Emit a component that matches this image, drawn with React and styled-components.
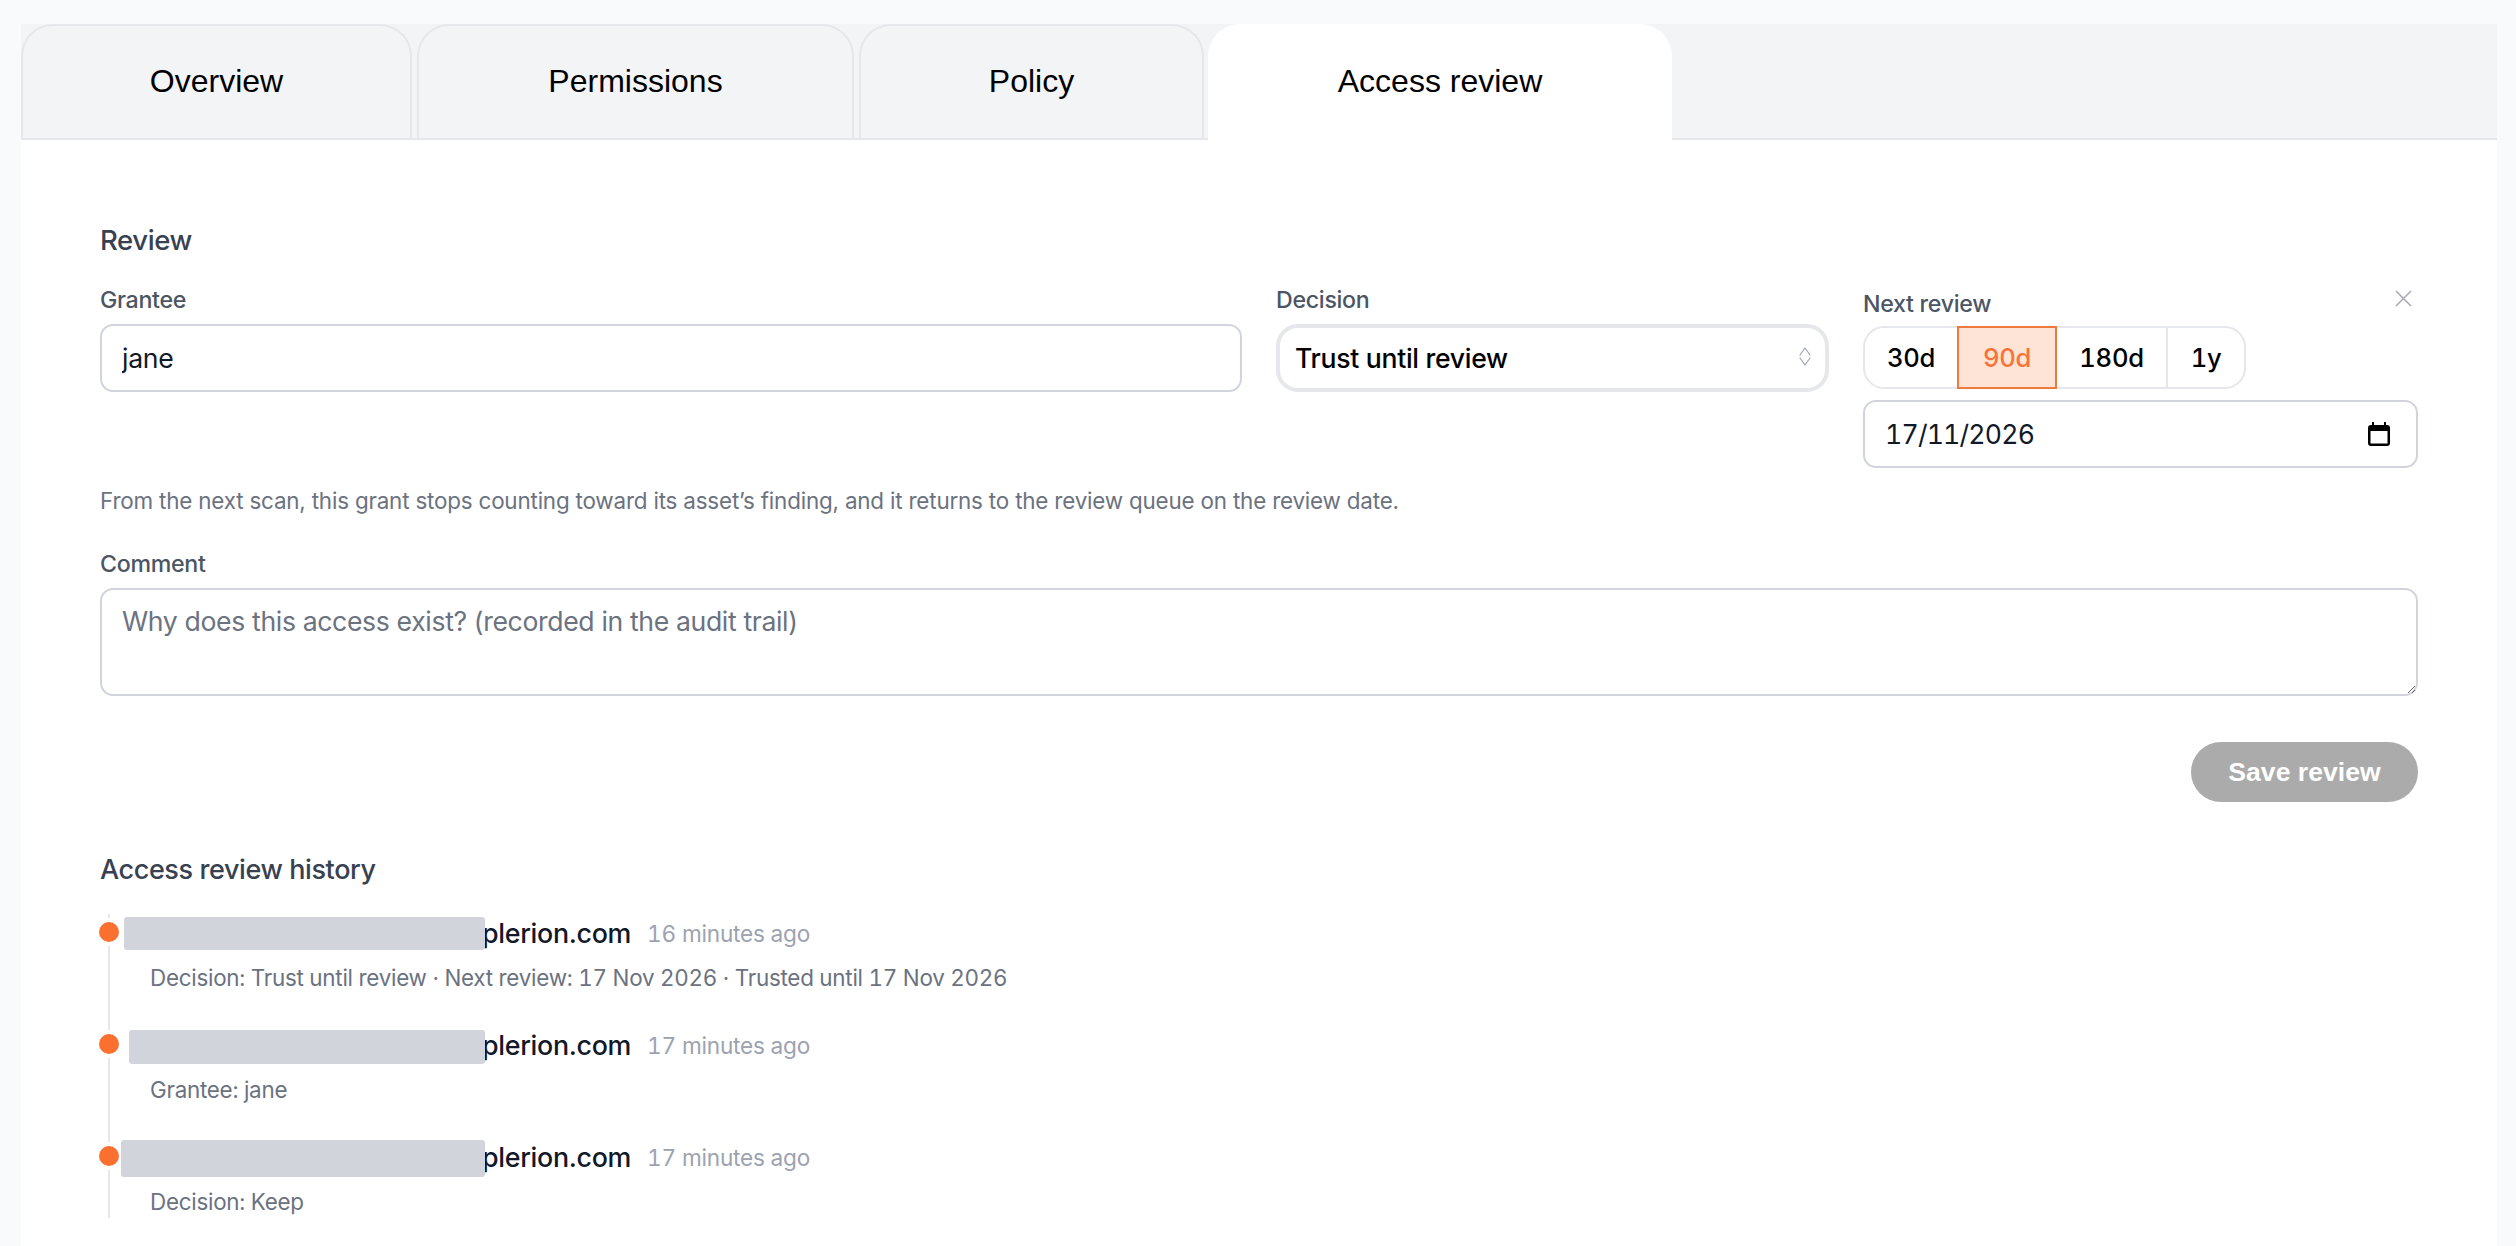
import React from "react";
import styled, { createGlobalStyle } from "styled-components";

const Global = createGlobalStyle`
  html, body { margin: 0; padding: 0; background: #f9fafb; overflow: hidden; }
  body { font-family: Inter, "Noto Sans", sans-serif; color: #111827; }
  * { box-sizing: border-box; }
`;

const Page = styled.div`
  height: 1246px;
  padding: 24px 19px 0 21px;
  overflow: hidden;
`;

const TabBar = styled.div`
  display: flex;
  gap: 5px;
  height: 116px;
  background: #f3f4f6;
  border-bottom: 2px solid #e5e7eb;
`;

const Tab = styled.div`
  height: ${(p) => (p.$active ? "116px" : "114px")};
  width: ${(p) => p.$w}px;
  margin-left: ${(p) => (p.$active ? "-1px" : "0")};
  padding-bottom: ${(p) => (p.$active ? "4px" : "2px")};
  display: flex;
  align-items: center;
  justify-content: center;
  font-family: "Liberation Sans", Arial, sans-serif;
  font-size: 32px;
  color: #000;
  background: ${(p) => (p.$active ? "#fff" : "#f3f4f6")};
  border: 2px solid ${(p) => (p.$active ? "#fff" : "#e5e7eb")};
  border-bottom: none;
  border-radius: 32px 32px 0 0;
  position: relative;
  white-space: nowrap;
`;

const Panel = styled.div`
  background: #fff;
  padding: 81px 79px 0;
  height: 1106px;
`;

const SectionTitle = styled.h2`
  margin: 0;
  font-size: 27.5px;
  line-height: 38px;
  font-weight: 500;
  color: #374151;
  letter-spacing: -0.4px;
`;

const HistoryTitle = styled(SectionTitle)`
  margin-top: 50px;
  line-height: 36px;
  font-size: 27px;
`;

const Fields = styled.div`
  display: grid;
  grid-template-columns: 1142px 553px 555px;
  column-gap: 34px;
  margin-top: 23px;
  align-items: start;
  position: relative;
`;

const Field = styled.div`
  display: flex;
  flex-direction: column;
  position: relative;
  padding-top: ${(p) => p.$top || 0}px;
`;

const Label = styled.label`
  display: block;
  height: 36px;
  line-height: 36px;
  font-size: 23.2px;
  font-weight: 500;
  color: #4b5563;
  letter-spacing: -0.3px;
`;

const TextInput = styled.input`
  margin-top: 6px;
  height: 68px;
  width: 100%;
  padding: 0 20px;
  border: 2px solid #d1d5db;
  border-radius: 13px;
  background: #fff;
  font: 400 26.6px Inter, sans-serif;
  letter-spacing: -0.3px;
  color: #111827;
  outline: none;
`;

const SelectWrap = styled.div`
  position: relative;
  margin-top: 6px;
`;

const Select = styled.select`
  appearance: none;
  width: 100%;
  height: 68px;
  padding: 0 40px 0 15px;
  border: 4px solid #e5e7eb;
  border-radius: 22px;
  background: #fff;
  font: 500 26.6px Inter, sans-serif;
  letter-spacing: -0.3px;
  color: #000;
  outline: none;
`;

const Chevrons = styled.svg`
  position: absolute;
  right: 18px;
  top: 22px;
  width: 12px;
  height: 21px;
  pointer-events: none;
`;

const Close = styled.svg`
  position: absolute;
  right: 6px;
  top: 8px;
  width: 17px;
  height: 17px;
`;

const Segments = styled.div`
  display: flex;
  align-self: flex-start;
  margin-top: 4px;
  height: 63px;
  border: 2px solid #e5e7eb;
  border-radius: 21px;
`;

const Segment = styled.div`
  width: ${(p) => p.$w}px;
  display: flex;
  align-items: center;
  justify-content: center;
  font-size: 25.6px;
  font-weight: 500;
  font-variant-numeric: tabular-nums;
  letter-spacing: -0.3px;
  margin: ${(p) => (p.$on ? "-2px 0" : "0")};
  color: ${(p) => (p.$on ? "#f97338" : "#000")};
  background: ${(p) => (p.$on ? "#fee4d6" : "transparent")};
  border: ${(p) => (p.$on ? "2px solid #f07a3e" : "none")};
  border-left: ${(p) => (p.$div ? "2px solid #e5e7eb" : p.$on ? "2px solid #f07a3e" : "none")};
`;

const DateBox = styled.div`
  margin-top: 11px;
  height: 68px;
  display: flex;
  align-items: center;
  justify-content: space-between;
  padding: 0 26px 0 20px;
  border: 2px solid #d1d5db;
  border-radius: 13px;
  font-size: 26.6px;
  font-variant-numeric: tabular-nums;
  letter-spacing: -0.8px;
  color: #111827;
`;

const CalendarIcon = styled.svg`
  width: 22px;
  height: 24px;
`;

const Help = styled.p`
  margin: 16px 0 0;
  font-size: 22.4px;
  line-height: 34px;
  color: #6b7280;
  letter-spacing: -0.18px;
`;

const CommentLabel = styled(Label)`
  margin-top: 28px;
`;

const Comment = styled.textarea`
  display: block;
  margin-top: 6px;
  width: 100%;
  height: 108px;
  padding: 15px 20px;
  border: 2px solid #d1d5db;
  border-radius: 13px;
  font: 400 26.6px Inter, sans-serif;
  letter-spacing: -0.35px;
  color: #111827;
  outline: none;
  resize: vertical;
  &::placeholder { color: #6b7280; opacity: 1; }
`;

const Actions = styled.div`
  display: flex;
  justify-content: flex-end;
  margin-top: 46px;
`;

const Save = styled.button`
  width: 227px;
  height: 60px;
  border: none;
  border-radius: 30px;
  background: #ababab;
  color: #fff;
  font: 700 26.6px "Liberation Sans", Arial, sans-serif;
`;

const Timeline = styled.div`
  margin: 26px 0 0 8px;
`;

const Item = styled.div`
  position: relative;
  height: ${(p) => (p.$last ? 80 : 112)}px;
  border-left: 2px solid #e5e7eb;
  padding-left: 40px;
`;

const Dot = styled.span`
  position: absolute;
  left: -11px;
  top: 8px;
  width: 20px;
  height: 20px;
  border-radius: 50%;
  background: #f97030;
  box-shadow: 0 0 0 4px #fff;
`;

const ItemHead = styled.div`
  display: flex;
  align-items: center;
  height: 36px;
`;

const Redacted = styled.span`
  flex: none;
  align-self: flex-start;
  width: ${(p) => p.$w}px;
  height: ${(p) => p.$h}px;
  margin-left: ${(p) => 335 - p.$w}px;
  margin-top: ${(p) => p.$t}px;
  border-radius: 3px;
  background: #d1d5db;
  position: relative;
  z-index: 1;
`;

const Domain = styled.span`
  margin: 2px 0 0 -3px;
  font-size: 26.8px;
  font-weight: 500;
  letter-spacing: -0.3px;
  color: #111827;
`;

const When = styled.span`
  margin: 3px 0 0 16px;
  font-size: 22.6px;
  font-variant-numeric: tabular-nums;
  color: #9ca3af;
  letter-spacing: -0.2px;
`;

const Detail = styled.div`
  margin-top: 11px;
  font-size: 22.4px;
  font-variant-numeric: tabular-nums;
  line-height: 34px;
  color: #6b7280;
  letter-spacing: -0.25px;
`;

const TABS = [
  { t: "Overview", w: 391 },
  { t: "Permissions", w: 437 },
  { t: "Policy", w: 345 },
  { t: "Access review", w: 464, active: true },
];

const SEGS = [
  { t: "30d", w: 92 },
  { t: "90d", w: 100, on: true },
  { t: "180d", w: 109 },
  { t: "1y", w: 78, div: true },
];

const HISTORY = [
  { w: 361, h: 33, top: 3, when: "16 minutes ago", d: "Decision: Trust until review · Next review: 17 Nov 2026 · Trusted until 17 Nov 2026" },
  { w: 356, h: 34, top: 4, when: "17 minutes ago", d: "Grantee: jane" },
  { w: 364, h: 37, top: 2, when: "17 minutes ago", d: "Decision: Keep" },
];

export default function App() {
  return (
    <Page>
      <Global />
      <TabBar>
        {TABS.map((x) => (
          <Tab key={x.t} $w={x.w} $active={x.active}>{x.t}</Tab>
        ))}
      </TabBar>
      <Panel>
        <SectionTitle>Review</SectionTitle>
        <Fields>
          <Field>
            <Label>Grantee</Label>
            <TextInput defaultValue="jane" />
          </Field>
          <Field>
            <Label>Decision</Label>
            <SelectWrap>
              <Select defaultValue="trust">
                <option value="trust">Trust until review</option>
                <option value="keep">Keep</option>
              </Select>
              <Chevrons viewBox="0 0 12 21" fill="none" stroke="#9ca3af" strokeWidth="1.2" strokeLinecap="round" strokeLinejoin="round">
                <path d="M1 9l5-7 5 7M1 12l5 7 5-7" />
              </Chevrons>
            </SelectWrap>
          </Field>
          <Field $top={4}>
            <Close viewBox="0 0 17 17" fill="none" stroke="#a5a8b8" strokeWidth="1.5">
              <path d="M1 1l15 15M16 1L1 16" />
            </Close>
            <Label>Next review</Label>
            <Segments>
              {SEGS.map((s) => (
                <Segment key={s.t} $w={s.w} $on={s.on} $div={s.div}>{s.t}</Segment>
              ))}
            </Segments>
            <DateBox>
              <span>17/11/2026</span>
              <CalendarIcon viewBox="0 0 22 24">
                <path fill="#000" d="M4 0h2v3h10V0h2v3h1a3 3 0 0 1 3 3v15a3 3 0 0 1-3 3H3a3 3 0 0 1-3-3V6a3 3 0 0 1 3-3h1zM2.500 9v12a.5.5 0 0 0 .5.500h16a.5.5 0 0 0 .5-.5V9z" />
              </CalendarIcon>
            </DateBox>
          </Field>
        </Fields>
        <Help>From the next scan, this grant stops counting toward its asset’s finding, and it returns to the review queue on the review date.</Help>
        <CommentLabel>Comment</CommentLabel>
        <Comment placeholder="Why does this access exist? (recorded in the audit trail)" />
        <Actions>
          <Save>Save review</Save>
        </Actions>
        <HistoryTitle>Access review history</HistoryTitle>
        <Timeline>
          {HISTORY.map((h, i) => (
            <Item key={i} $last={i === HISTORY.length - 1}>
              <Dot />
              <ItemHead>
                <Redacted $w={h.w} $h={h.h} $t={h.top} />
                <Domain>plerion.com</Domain>
                <When>{h.when}</When>
              </ItemHead>
              <Detail>{h.d}</Detail>
            </Item>
          ))}
        </Timeline>
      </Panel>
    </Page>
  );
}
